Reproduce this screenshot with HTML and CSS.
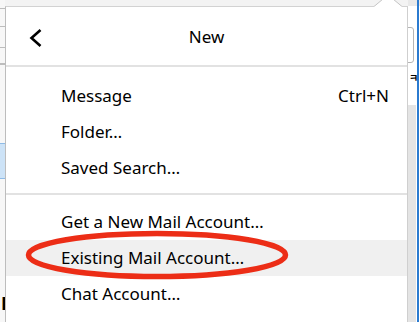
FILE: index.html
```html
<!DOCTYPE html>
<html>
<head>
<meta charset="utf-8">
<link rel="stylesheet" href="styles.css">
</head>
<body>
<div class="screen">
  <div class="left-strip">
    <div class="ls-line l1"></div>
    <div class="ls-line l2"></div>
    <div class="ls-line l3"></div>
    <div class="ls-line l4"></div>
    <div class="ls-sel"></div>
    <div class="ls-letter">E</div>
  </div>
  <div class="panel-col">
    <div class="panel">
      <svg class="notch" width="30" height="8" viewBox="0 0 30 8">
        <polygon points="1,7.5 10,0 20,0 29,7.5" fill="#ffffff" stroke="#c4c4c4" stroke-width="1"/>
        <rect x="1.5" y="7" width="27" height="2" fill="#ffffff"/>
      </svg>
      <div class="header">
        <div class="back">
          <svg width="16" height="20" viewBox="0 0 16 20">
            <path d="M12.5 2 L3.5 10 L12.5 18" fill="none" stroke="#000" stroke-width="2.6" stroke-linejoin="miter"/>
          </svg>
        </div>
        <div class="title">New</div>
        <div class="spacer"></div>
      </div>
      <div class="sep"></div>
      <div class="group first">
        <div class="item"><span>Message</span><span class="key">Ctrl+N</span></div>
        <div class="item"><span>Folder…</span></div>
        <div class="item"><span>Saved Search…</span></div>
      </div>
      <div class="sep"></div>
      <div class="group second">
        <div class="item"><span>Get a New Mail Account…</span></div>
        <div class="item hover"><span>Existing Mail Account…</span></div>
        <div class="item"><span>Chat Account…</span></div>
      </div>
      <svg class="circle" width="270" height="56" viewBox="0 0 270 56">
        <ellipse cx="134" cy="27" rx="128.5" ry="21.5" fill="none" stroke="#ec2d16" stroke-width="5.5"/>
      </svg>
    </div>
  </div>
  <div class="right-strip">
    <div class="rs-top"></div>
    <div class="rs-box"></div>
    <div class="rs-icon">ㅋ</div>
    <div class="rs-scroll"></div>
    <div class="rs-blue"></div>
  </div>
</div>
</body>
</html>
```
FILE: styles.css
```css
html, body {
  margin: 0;
  padding: 0;
  background: #ffffff;
}
body {
  width: 420px;
  height: 322px;
  overflow: hidden;
  font-family: "Noto Sans", "Open Sans", sans-serif;
  color: #000;
}
.screen {
  display: flex;
  width: 420px;
  height: 322px;
  overflow: hidden;
}
.left-strip {
  position: relative;
  width: 5px;
  flex: none;
  background: #f7f7f7;
  overflow: hidden;
}
.ls-line {
  position: absolute;
  left: 0;
  width: 5px;
  height: 1px;
  background: #bdbdbd;
}
.l1 { top: 8px; }
.l2 { top: 26px; }
.l3 { top: 47px; }
.l4 { top: 63px; height: 2px; }
.ls-sel {
  position: absolute;
  left: 0;
  top: 143px;
  width: 5px;
  height: 34px;
  background: #cde3f7;
  border-top: 1px solid #8fbbe6;
  border-bottom: 1px solid #8fbbe6;
}
.ls-letter {
  position: absolute;
  left: 1px;
  top: 294px;
  font-family: "DejaVu Sans", sans-serif;
  font-weight: bold;
  font-size: 17px;
  line-height: 20px;
}
.panel-col {
  width: 403px;
  flex: none;
  padding-top: 6px;
  background: #f3f3f3;
}
.panel {
  position: relative;
  height: 330px;
  background: #ffffff;
  border-left: 1px solid #bdbdbd;
  border-right: 1px solid #cfcfcf;
  border-top: 1px solid #d2d2d2;
  box-sizing: border-box;
}
.notch {
  position: absolute;
  left: 367px;
  top: -8px;
}
.header {
  display: grid;
  grid-template-columns: 1fr auto 1fr;
  align-items: center;
  height: 58px;
}
.back {
  display: flex;
  align-items: center;
  padding-left: 22px;
  padding-top: 4px;
}
.title {
  font-size: 17px;
  line-height: 24px;
  padding-top: 2px;
}
.sep {
  height: 2px;
  background: #e2e2e2;
}
.group.first {
  padding-top: 11px;
  padding-bottom: 7px;
}
.group.second {
  padding-top: 9px;
}
.item {
  display: flex;
  justify-content: space-between;
  align-items: center;
  height: 36px;
  padding-left: 55px;
  padding-right: 18px;
  font-size: 17px;
  line-height: 24px;
}
.item.hover {
  background: #f0f0f0;
}
.circle {
  position: absolute;
  left: 17px;
  top: 221px;
}
.right-strip {
  position: relative;
  width: 12px;
  flex: none;
  background: #ffffff;
  overflow: hidden;
}
.rs-top {
  height: 6px;
  background: #e9e9e9;
}
.rs-box {
  position: absolute;
  left: -6px;
  top: 27px;
  width: 10px;
  height: 34px;
  border: 1px solid #b5b5b5;
  border-radius: 3px;
}
.rs-icon {
  position: absolute;
  left: 1px;
  top: 72px;
  font-family: "Noto Sans CJK KR", sans-serif;
  font-size: 10px;
  line-height: 12px;
  font-weight: bold;
}
.rs-scroll {
  position: absolute;
  left: 0;
  top: 105px;
  width: 8px;
  bottom: 0;
  background: #e4e4e4;
}
.rs-blue {
  position: absolute;
  left: 9px;
  top: 0;
  width: 2px;
  height: 322px;
  background: #2b7bd0;
}
```
